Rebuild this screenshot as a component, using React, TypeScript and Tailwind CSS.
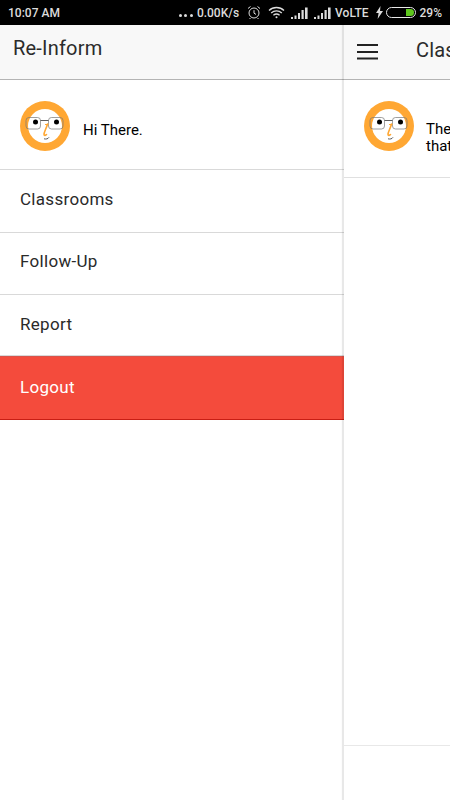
import React from "react";

const Avatar = () => (
  <svg width="50" height="50" viewBox="0 0 50 50" className="shrink-0">
    <circle cx="25" cy="25" r="25" fill="#ffa733" />
    <circle cx="25" cy="25" r="17" fill="#ffffff" />
    <rect x="6" y="16.5" width="14.5" height="11.5" rx="3" fill="none" stroke="#777" strokeWidth="0.7" />
    <rect x="28.5" y="16.5" width="14.5" height="11.5" rx="3" fill="none" stroke="#777" strokeWidth="0.7" />
    <path d="M20.5 19.5h8" stroke="#333" strokeWidth="0.8" />
    <circle cx="15.5" cy="21" r="2.5" fill="#000" />
    <circle cx="36.5" cy="21" r="2.5" fill="#000" />
    <path d="M27.5 23c-1 4-3 7-3.5 10-.2 1.6 1.5 1.8 2.5.6" fill="none" stroke="#ffa733" strokeWidth="1.6" strokeLinecap="round" />
    <path d="M25 23.5h3.5" stroke="#ffa733" strokeWidth="1" />
    <path d="M24 37.8c2 .5 4 .2 5-1.5" fill="none" stroke="#333" strokeWidth="0.8" />
  </svg>
);

const Signal = ({ className }: { className: string }) => (
  <svg width="17" height="12" viewBox="0 0 17 12" className={className} fill="#dcdcdc">
    <path d="M0 10h2v2H0zM3.5 8.5h2V12h-2zM7 6h2v6H7zM10.5 3h2.2v9h-2.2zM14 .5h2.6V12H14z" />
  </svg>
);

const StatusBar = () => (
  <div className="h-[25px] bg-black text-[#dcdcdc] flex items-center justify-between pl-2 pr-2 text-[12px] font-medium">
    <span>10:07 AM</span>
    <div className="flex items-center">
      <div className="flex items-center gap-[2.5px] mr-1 mt-[5px]">
        <div className="w-[3px] h-[3px] rounded-full bg-[#dcdcdc]" />
        <div className="w-[3px] h-[3px] rounded-full bg-[#dcdcdc]" />
        <div className="w-[3px] h-[3px] rounded-full bg-[#dcdcdc]" />
      </div>
      <span>0.00K/s</span>
      <svg width="14" height="15" viewBox="0 0 14 15" className="ml-[8px]" fill="none" stroke="#dcdcdc" strokeWidth="1">
        <circle cx="7" cy="8" r="5" />
        <path d="M7 5.2v3l2 1.2M1 3.5l2.5-2M13 3.5l-2.5-2M3.5 13l-1 1M10.5 13l1 1" />
      </svg>
      <svg width="17" height="13" viewBox="0 0 17 13" className="ml-[7px]" fill="none" stroke="#dcdcdc" strokeWidth="1.3">
        <path d="M1 4.5c4-4 11-4 15 0M3.2 7c3-2.8 7.6-2.8 10.6 0M5.4 9.3c1.8-1.5 4.4-1.5 6.2 0" />
        <circle cx="8.5" cy="11.3" r="1" fill="#dcdcdc" stroke="none" />
      </svg>
      <Signal className="ml-[6px]" />
      <Signal className="ml-[6px]" />
      <span className="ml-[4px]">VoLTE</span>
      <svg width="7" height="13" viewBox="0 0 7 13" className="ml-[7px]" fill="#dcdcdc">
        <path d="M4.5 0 0 7h2.6L1.6 13 7 5H4z" />
      </svg>
      <div className="ml-[3px] w-[30px] h-[11px] rounded-full border border-[#e8e8e8] flex justify-end p-px">
        <div className="w-[8px] h-full bg-[#5fc81e] rounded-r-full" />
      </div>
      <span className="ml-[4px]">29%</span>
    </div>
  </div>
);

const menu = [
  { label: "Classrooms", row: "h-[63px] pb-[2px]" },
  { label: "Follow-Up", row: "h-[62px] pb-[3px]" },
  { label: "Report", row: "h-[61px]" },
];

export default function App() {
  return (
    <div className="w-[450px] h-[800px] flex flex-col overflow-hidden bg-white font-['Roboto',sans-serif]">
      <StatusBar />
      <div className="flex-1 flex min-h-0">
        {/* side menu */}
        <div className="w-[344px] shrink-0 flex flex-col">
          <div className="h-[55px] bg-[#f8f8f8] border-b border-[#b4b4b4] pl-[13px] pt-[9px] text-[20px] tracking-[0.2px] leading-[28px] text-[#2b2b2b]">
            Re-Inform
          </div>
          <div className="h-[90px] flex items-center pl-5 border-b border-[#d9d9d9]">
            <div className="mt-[2px] flex">
              <Avatar />
            </div>
            <span className="ml-[13px] text-[15px] text-black mt-[11px]">Hi There.</span>
          </div>
          {menu.map((item) => (
            <div
              key={item.label}
              className={`${item.row} flex items-center pl-5 border-b border-[#d9d9d9] text-[17px] tracking-[0.3px] text-[#2a2a2a]`}
            >
              {item.label}
            </div>
          ))}
          <div className="h-[64px] flex items-center pl-5 bg-[#f44b3c] border-t border-[#d9534a] border-b border-b-[#c81e14] text-[17px] tracking-[0.3px] text-white">
            Logout
          </div>
        </div>
        {/* page behind the menu */}
        <div className="relative flex-1 min-w-0 flex flex-col overflow-hidden shadow-[-2px_0_1px_rgba(0,0,0,0.09)]">
          <div className="h-[55px] bg-[#f8f8f8] border-b border-[#b4b4b4] flex items-center shrink-0">
            <svg width="23" height="16" viewBox="0 0 23 16" className="ml-[12px] shrink-0 mt-[-1px]">
              <path d="M1 1h21M1 8h21M1 14.5h21" stroke="#222" strokeWidth="2" />
            </svg>
            <span className="ml-[37px] text-[20px] tracking-[0.2px] text-[#2b2b2b] whitespace-nowrap -mt-[5px]">
              Classrooms
            </span>
          </div>
          <div className="h-[98px] shrink-0 flex items-start pl-5 pt-[21px] border-b border-[#e0e0e0]">
            <Avatar />
            <span className="ml-[12px] mt-[20px] text-[15px] leading-[17px] text-black whitespace-nowrap">
              There are no classrooms
              <br />
              that you have joined.
            </span>
          </div>
          <div className="flex-1" />
          <div className="h-[55px] shrink-0 border-t border-[#e8e8e8]" />
        </div>
      </div>
    </div>
  );
}
